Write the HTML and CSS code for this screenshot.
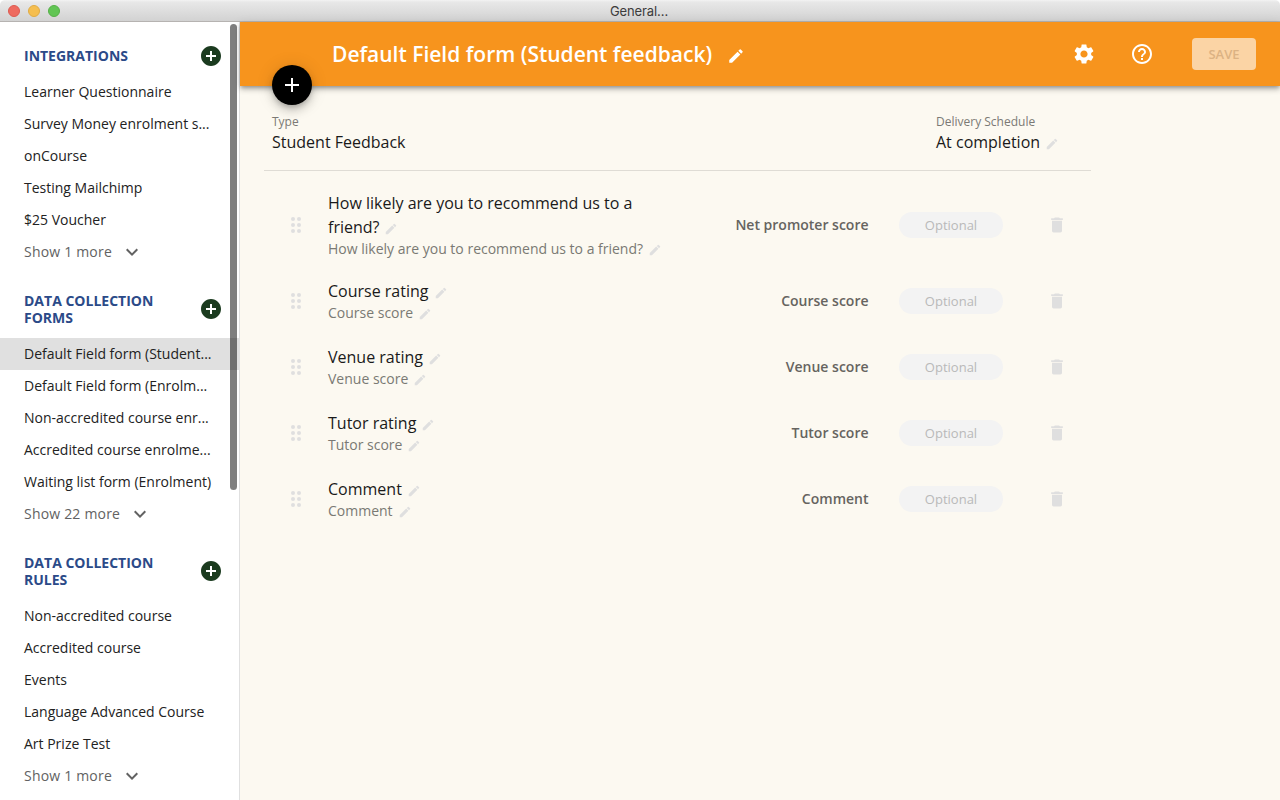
FILE: index.html
```html
<!DOCTYPE html>
<html lang="en">
<head>
<meta charset="utf-8">
<title>General...</title>
<link rel="stylesheet" href="styles.css">
</head>
<body>
<svg class="defs" width="0" height="0" aria-hidden="true">
  <symbol id="edit" viewBox="0 0 24 24"><path d="M3 17.25V21h3.75L17.81 9.94l-3.75-3.75L3 17.25zM20.71 7.04c.39-.39.39-1.02 0-1.41l-2.34-2.34a.9959.9959 0 0 0-1.41 0l-1.83 1.83 3.75 3.75 1.83-1.83z"/></symbol>
  <symbol id="add-circle" viewBox="0 0 24 24"><path d="M12 2C6.48 2 2 6.48 2 12s4.48 10 10 10 10-4.48 10-10S17.52 2 12 2zm5 11h-4v4h-2v-4H7v-2h4V7h2v4h4v2z"/></symbol>
  <symbol id="add" viewBox="0 0 24 24"><path d="M19 13h-6v6h-2v-6H5v-2h6V5h2v6h6v2z"/></symbol>
  <symbol id="more" viewBox="0 0 24 24"><path d="M7.41 8.59 12 13.17l4.59-4.58L18 10l-6 6-6-6z"/></symbol>
  <symbol id="trash" viewBox="0 0 24 24"><path d="M6 19c0 1.100.9 2 2 2h8c1.100 0 2-.9 2-2V7H6v12zM19 4h-3.500l-1-1h-5l-1 1H5v2h14V4z"/></symbol>
  <symbol id="drag" viewBox="0 0 24 24"><circle cx="9" cy="6" r="2"/><circle cx="15" cy="6" r="2"/><circle cx="9" cy="12" r="2"/><circle cx="15" cy="12" r="2"/><circle cx="9" cy="18" r="2"/><circle cx="15" cy="18" r="2"/></symbol>
  <symbol id="settings" viewBox="0 0 24 24"><path d="M19.14 12.94c.04-.3.06-.61.06-.94 0-.32-.02-.64-.07-.94l2.030-1.580c.18-.14.23-.41.12-.61l-1.920-3.320c-.12-.22-.37-.29-.59-.22l-2.390.96c-.5-.38-1.030-.7-1.620-.94l-.36-2.540c-.04-.24-.24-.41-.48-.41h-3.840c-.24 0-.43.17-.47.41l-.36 2.540c-.59.24-1.130.57-1.620.94l-2.390-.96c-.22-.08-.47 0-.59.22L2.740 8.870c-.12.21-.08.47.12.61l2.030 1.580c-.05.3-.09.63-.09.94s.02.64.07.94l-2.030 1.580c-.18.14-.23.41-.12.61l1.920 3.320c.12.22.37.29.59.22l2.390-.96c.5.38 1.030.7 1.620.94l.36 2.540c.05.24.24.41.48.41h3.840c.24 0 .44-.17.47-.41l.36-2.540c.59-.24 1.130-.56 1.620-.94l2.390.96c.22.08.47 0 .59-.22l1.920-3.320c.12-.22.07-.47-.12-.61l-2.010-1.580zM12 15.600c-1.980 0-3.600-1.620-3.600-3.600s1.620-3.600 3.600-3.600 3.600 1.620 3.600 3.600-1.620 3.600-3.600 3.600z"/></symbol>
  <symbol id="help" viewBox="0 0 24 24"><path d="M11 18h2v-2h-2v2zm1-16C6.480 2 2 6.480 2 12s4.480 10 10 10 10-4.480 10-10S17.520 2 12 2zm0 18c-4.410 0-8-3.590-8-8s3.590-8 8-8 8 3.590 8 8-3.590 8-8 8zm0-14c-2.210 0-4 1.790-4 4h2c0-1.100.9-2 2-2s2 .9 2 2c0 2-3 1.750-3 5h2c0-2.250 3-2.500 3-5 0-2.210-1.790-4-4-4z"/></symbol>
</svg>
<div class="window">
  <header class="titlebar">
    <div class="lights"><span class="light red"></span><span class="light yellow"></span><span class="light green"></span></div>
    <span class="window-title">General...</span>
  </header>
  <div class="body">
    <aside class="sidebar">
      <section>
        <div class="group-head first"><h2>INTEGRATIONS</h2><svg class="add-icon"><use href="#add-circle"/></svg></div>
        <div class="item">Learner Questionnaire</div>
        <div class="item">Survey Money enrolment s...</div>
        <div class="item">onCourse</div>
        <div class="item">Testing Mailchimp</div>
        <div class="item">$25 Voucher</div>
        <div class="show-more">Show 1 more<svg><use href="#more"/></svg></div>
      </section>
      <section>
        <div class="group-head"><h2>DATA COLLECTION FORMS</h2><svg class="add-icon"><use href="#add-circle"/></svg></div>
        <div class="item selected">Default Field form (Student...</div>
        <div class="item">Default Field form (Enrolm...</div>
        <div class="item">Non-accredited course enr...</div>
        <div class="item">Accredited course enrolme...</div>
        <div class="item">Waiting list form (Enrolment)</div>
        <div class="show-more">Show 22 more<svg><use href="#more"/></svg></div>
      </section>
      <section>
        <div class="group-head"><h2>DATA COLLECTION RULES</h2><svg class="add-icon"><use href="#add-circle"/></svg></div>
        <div class="item">Non-accredited course</div>
        <div class="item">Accredited course</div>
        <div class="item">Events</div>
        <div class="item">Language Advanced Course</div>
        <div class="item">Art Prize Test</div>
        <div class="show-more">Show 1 more<svg><use href="#more"/></svg></div>
      </section>
      <div class="scrollbar"></div>
    </aside>
    <main class="main">
      <div class="appbar">
        <h1>Default Field form (Student feedback)</h1>
        <svg class="title-edit"><use href="#edit"/></svg>
        <div class="actions">
          <svg><use href="#settings"/></svg>
          <svg><use href="#help"/></svg>
          <button class="save" disabled>SAVE</button>
        </div>
        <div class="fab"><svg><use href="#add"/></svg></div>
      </div>
      <div class="form">
        <div class="summary">
          <div><div class="label">Type</div><div class="value">Student Feedback</div></div>
          <div class="delivery"><div class="label">Delivery Schedule</div><div class="value">At completion<svg class="edit"><use href="#edit"/></svg></div></div>
        </div>
        <div class="row tall">
          <svg class="drag"><use href="#drag"/></svg>
          <div class="text"><div class="name">How likely are you to recommend us to a friend?<svg class="edit"><use href="#edit"/></svg></div><div class="help">How likely are you to recommend us to a friend?<svg class="edit"><use href="#edit"/></svg></div></div>
          <div class="field">Net promoter score</div><div class="chip">Optional</div><svg class="trash"><use href="#trash"/></svg>
        </div>
        <div class="row">
          <svg class="drag"><use href="#drag"/></svg>
          <div class="text"><div class="name">Course rating<svg class="edit"><use href="#edit"/></svg></div><div class="help">Course score<svg class="edit"><use href="#edit"/></svg></div></div>
          <div class="field">Course score</div><div class="chip">Optional</div><svg class="trash"><use href="#trash"/></svg>
        </div>
        <div class="row">
          <svg class="drag"><use href="#drag"/></svg>
          <div class="text"><div class="name">Venue rating<svg class="edit"><use href="#edit"/></svg></div><div class="help">Venue score<svg class="edit"><use href="#edit"/></svg></div></div>
          <div class="field">Venue score</div><div class="chip">Optional</div><svg class="trash"><use href="#trash"/></svg>
        </div>
        <div class="row">
          <svg class="drag"><use href="#drag"/></svg>
          <div class="text"><div class="name">Tutor rating<svg class="edit"><use href="#edit"/></svg></div><div class="help">Tutor score<svg class="edit"><use href="#edit"/></svg></div></div>
          <div class="field">Tutor score</div><div class="chip">Optional</div><svg class="trash"><use href="#trash"/></svg>
        </div>
        <div class="row">
          <svg class="drag"><use href="#drag"/></svg>
          <div class="text"><div class="name">Comment<svg class="edit"><use href="#edit"/></svg></div><div class="help">Comment<svg class="edit"><use href="#edit"/></svg></div></div>
          <div class="field">Comment</div><div class="chip">Optional</div><svg class="trash"><use href="#trash"/></svg>
        </div>
      </div>
    </main>
  </div>
</div>
</body>
</html>
```
FILE: styles.css
```css
* { box-sizing: border-box; }
body {
  margin: 0;
  background: #fff;
  font-family: "Open Sans", "Noto Sans", sans-serif;
  font-size: 14px;
  -webkit-font-smoothing: antialiased;
}
svg { display: block; flex: none; fill: currentColor; }
.defs { position: absolute; }
h1, h2 { margin: 0; }

.window { display: flex; flex-direction: column; height: 800px; overflow: hidden; }
.titlebar {
  display: grid;
  grid-template-columns: 1fr auto 1fr;
  align-items: center;
  height: 22px;
  flex: none;
  background: linear-gradient(#f3f3f3 0, #e8e8e8 2px, #d2d2d2 100%);
  border-bottom: 1px solid #b6b3b1;
  border-radius: 5px 5px 0 0;
}
.lights { display: flex; gap: 8px; padding-left: 8px; }
.light { width: 12px; height: 12px; border-radius: 50%; }
.red { background: #ee6a5f; border: 1px solid #dd5a50; }
.yellow { background: #f5be4f; border: 1px solid #e0ab43; }
.green { background: #61c554; border: 1px solid #55b047; }
.window-title { padding-right: 2px; font: 13px/20px Inter, sans-serif; letter-spacing: -0.1px; color: #3c3c3c; }

.body { display: flex; flex: 1; min-height: 0; }

.sidebar {
  position: relative;
  width: 240px;
  flex: none;
  background: #fff;
  border-right: 1px solid #e0e0e0;
  overflow: hidden;
}
.group-head {
  display: flex;
  align-items: center;
  justify-content: space-between;
  height: 70px;
  padding: 24px 16px 12px 24px;
}
.group-head.first { height: 54px; padding-top: 26px; }
.group-head.first h2 { padding-bottom: 1px; }
.group-head h2 {
  width: 150px;
  font-size: 14px;
  line-height: 17px;
  font-weight: 700;
  color: #2b4a88;
}
.add-icon { width: 24px; height: 24px; color: #1b3b1f; }
.item, .show-more {
  height: 32px;
  padding: 0 24px;
  line-height: 32px;
  white-space: nowrap;
  color: #222;
}
.item.selected { background: #e0e0e0; }
.show-more { display: flex; align-items: center; gap: 8px; letter-spacing: 0.2px; color: #626262; }
.show-more svg { width: 24px; height: 24px; }
.scrollbar {
  position: absolute;
  top: 2px;
  left: 230px;
  width: 7px;
  height: 466px;
  border-radius: 4px;
  background: rgba(0, 0, 0, 0.5);
}

.main { flex: 1; background: #fcf9f1; }
.appbar {
  position: relative;
  display: flex;
  align-items: center;
  height: 64px;
  padding: 0 24px 0 92px;
  background: #f7941d;
  color: #fff;
  box-shadow: 0 2px 4px -1px rgba(0, 0, 0, 0.3), 0 4px 5px rgba(0, 0, 0, 0.16), 0 1px 10px rgba(0, 0, 0, 0.08);
}
.appbar h1 { font-size: 21px; line-height: 32px; font-weight: 600; white-space: nowrap; }
.title-edit { width: 18px; height: 18px; margin: 4px 0 0 15px; }
.actions { display: flex; align-items: center; margin-left: auto; }
.actions svg { width: 24px; height: 24px; margin-right: 34px; }
.save {
  width: 64px;
  height: 32px;
  margin-left: 4px;
  padding: 0;
  border: 0;
  border-radius: 4px;
  background: #fbd4a5;
  color: #dcb283;
  font: 600 13px/32px "Open Sans", sans-serif;
}
.fab {
  position: absolute;
  left: 32px;
  top: 43px;
  display: grid;
  place-items: center;
  width: 40px;
  height: 40px;
  border-radius: 50%;
  background: #000;
  box-shadow: 0 3px 5px -1px rgba(0, 0, 0, 0.2), 0 6px 10px rgba(0, 0, 0, 0.14), 0 1px 18px rgba(0, 0, 0, 0.12);
}
.fab svg { width: 24px; height: 24px; }

.form { width: 827px; margin-left: 24px; padding-top: 26px; }
.summary {
  display: flex;
  justify-content: space-between;
  height: 59px;
  margin-bottom: 11px;
  padding-left: 8px;
  border-bottom: 1px solid #dfdcd5;
}
.delivery { width: 155px; }
.label { font-size: 12px; line-height: 20px; color: #7b7975; }
.value { display: flex; font-size: 16px; line-height: 20px; color: #1a1a1a; }
.edit { display: inline-block; width: 14px; height: 14px; margin-left: 5px; color: #dfdfdf; vertical-align: -3px; }
.value .edit { margin: 5px 0 0 5px; }

.row { display: flex; align-items: center; height: 66px; padding-left: 20px; }
.row.tall { height: 86px; }
.drag { width: 24px; height: 24px; color: #dfdfdf; }
.text { width: 350px; margin-left: 20px; }
.name { width: 334px; font-size: 16px; line-height: 24px; color: #1a1a1a; }
.help { line-height: 20px; white-space: nowrap; color: #7a7974; }
.field { width: 191px; padding: 0 0.5px 1px 0; line-height: 19px; text-align: right; font-weight: 600; color: #666460; }
.chip {
  width: 104px;
  height: 26px;
  margin-left: 30px;
  border-radius: 13px;
  background: #f3f3f3;
  color: #b9b9b9;
  font-size: 13px;
  line-height: 26px;
  text-align: center;
}
.trash { width: 20px; height: 20px; margin-left: 44px; color: #dfdfdf; }
```
